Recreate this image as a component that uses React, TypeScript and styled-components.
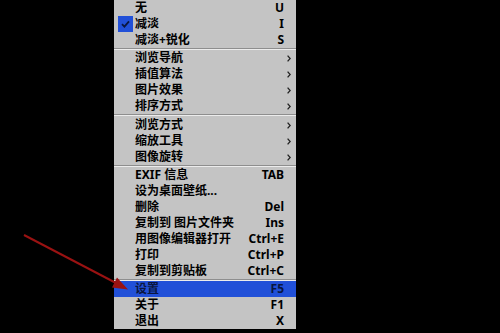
import React, { FC } from "react";
import styled, { createGlobalStyle } from "styled-components";

const GlobalStyle = createGlobalStyle`
  html, body {
    margin: 0;
    padding: 0;
    background: #000;
  }
`;

const StyledStage = styled.div`
  position: relative;
  width: 500px;
  height: 333px;
  overflow: hidden;
  background: #000;
  padding-left: 114px;
  box-sizing: border-box;
`;

const StyledMenu = styled.ul`
  list-style: none;
  margin: 0;
  padding: 0;
  width: 182px;
  background: #c4c4c4;
  font-family: "Noto Sans", "Noto Sans CJK SC", sans-serif;
  font-size: 12px;
  font-weight: 700;
  color: #000;
`;

const StyledItem = styled.li<{ $active?: boolean }>`
  display: grid;
  grid-template-columns: 21px 1fr auto 12px;
  align-items: center;
  height: 16px;
  line-height: 16px;
  background: ${({ $active }) => ($active ? "#2150d8" : "transparent")};
  color: ${({ $active }) => ($active ? "#0a1640" : "#000")};
  white-space: nowrap;
`;

const StyledCheckCell = styled.span`
  display: flex;
  align-items: center;
  justify-content: center;
  height: 16px;
`;

const StyledCheckBox = styled.span`
  display: flex;
  align-items: center;
  justify-content: center;
  width: 15px;
  height: 16px;
  margin-left: 1px;
  background: #2150d8;
`;

const StyledLabel = styled.span`
  overflow: hidden;
`;

const StyledShortcut = styled.span`
  text-align: right;
  padding-left: 8px;
`;

const StyledArrowCell = styled.span`
  display: flex;
  align-items: center;
  justify-content: flex-start;
  padding-left: 3px;
  height: 16px;
`;

const StyledSeparator = styled.li<{ $thick?: boolean }>`
  height: 0;
  border-top: 1px solid #8e8e8e;
  border-bottom: 1px solid #ececec;
  margin-bottom: ${({ $thick }) => ($thick ? "1px" : "0")};
`;

const StyledOverlay = styled.svg`
  position: absolute;
  left: 0;
  top: 0;
  pointer-events: none;
`;

type Entry =
  | { sep: true; thick?: boolean }
  | {
      sep?: false;
      label: string;
      shortcut?: string;
      sub?: boolean;
      checked?: boolean;
      active?: boolean;
    };

const entries: Entry[] = [
  { label: "无", shortcut: "U" },
  { label: "减淡", shortcut: "I", checked: true },
  { label: "减淡+锐化", shortcut: "S" },
  { sep: true },
  { label: "浏览导航", sub: true },
  { label: "插值算法", sub: true },
  { label: "图片效果", sub: true },
  { label: "排序方式", sub: true },
  { sep: true, thick: true },
  { label: "浏览方式", sub: true },
  { label: "缩放工具", sub: true },
  { label: "图像旋转", sub: true },
  { sep: true },
  { label: "EXIF 信息", shortcut: "TAB" },
  { label: "设为桌面壁纸..." },
  { label: "删除", shortcut: "Del" },
  { label: "复制到 图片文件夹", shortcut: "Ins" },
  { label: "用图像编辑器打开", shortcut: "Ctrl+E" },
  { label: "打印", shortcut: "Ctrl+P" },
  { label: "复制到剪贴板", shortcut: "Ctrl+C" },
  { sep: true },
  { label: "设置", shortcut: "F5", active: true },
  { label: "关于", shortcut: "F1" },
  { label: "退出", shortcut: "X" },
];

const CheckIcon: FC = () => (
  <svg width="9" height="8" viewBox="0 0 9 8">
    <path
      d="M1 4.2 L3.4 6.6 L8 1.4"
      fill="none"
      stroke="#0a1640"
      strokeWidth="1.8"
    />
  </svg>
);

const Chevron: FC = () => (
  <svg width="4" height="7" viewBox="0 0 4 7">
    <path d="M0.6 0.6 L3.2 3.5 L0.6 6.4" fill="none" stroke="#222" strokeWidth="1.3" />
  </svg>
);

const App: FC = () => (
  <>
    <GlobalStyle />
    <StyledStage>
      <StyledMenu>
        {entries.map((e, i) =>
          e.sep ? (
            <StyledSeparator key={i} $thick={e.thick} />
          ) : (
            <StyledItem key={i} $active={e.active}>
              <StyledCheckCell>
                {e.checked && (
                  <StyledCheckBox>
                    <CheckIcon />
                  </StyledCheckBox>
                )}
              </StyledCheckCell>
              <StyledLabel>{e.label}</StyledLabel>
              <StyledShortcut>{e.shortcut}</StyledShortcut>
              <StyledArrowCell>{e.sub && <Chevron />}</StyledArrowCell>
            </StyledItem>
          )
        )}
      </StyledMenu>

      <StyledOverlay width="500" height="333" viewBox="0 0 500 333">
        <line x1="24" y1="235" x2="116" y2="283" stroke="#9a1212" strokeWidth="2" />
        <polygon points="128,289.5 112,287.5 117,277.5" fill="#9a1212" />
      </StyledOverlay>
    </StyledStage>
  </>
);

export default App;
